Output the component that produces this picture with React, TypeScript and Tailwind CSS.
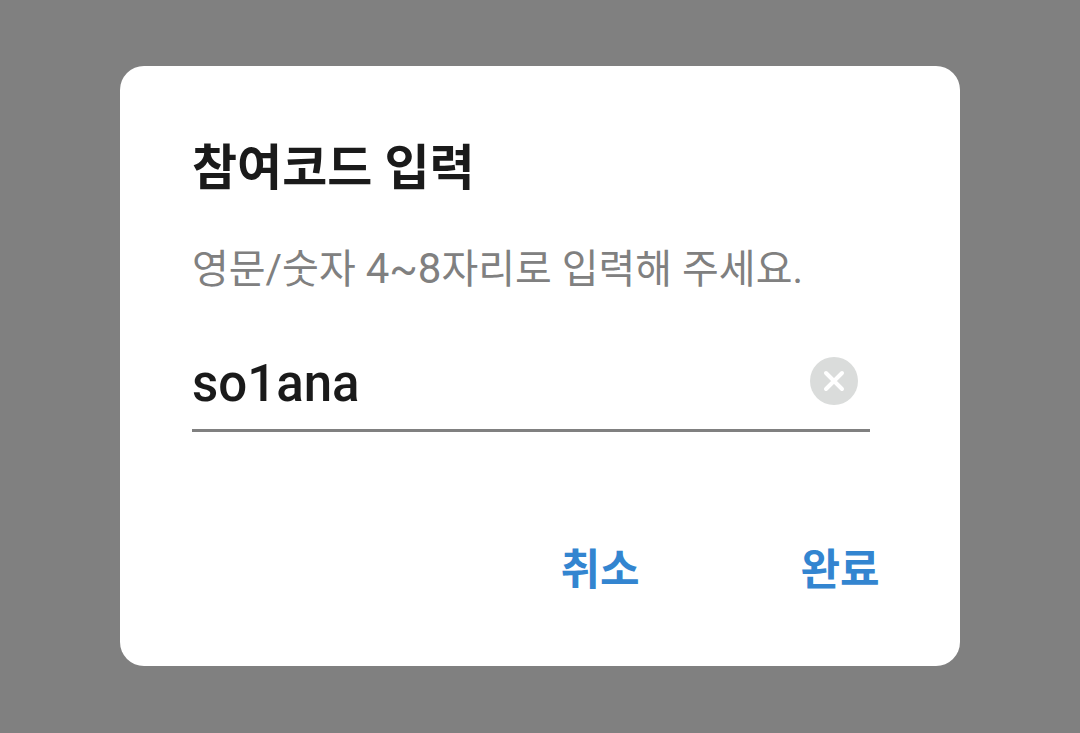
import React, { useState } from 'react';

export default function App() {
  const [code, setCode] = useState('so1ana');

  return (
    <div className="flex min-h-screen items-center justify-center bg-[#808080] px-[120px] pt-16 pb-[65px] font-[Roboto,'Noto_Sans_CJK_KR',sans-serif]">
      <form
        role="dialog"
        aria-labelledby="title"
        className="w-full rounded-3xl bg-white px-[72px] pt-[67px] pb-15"
        onSubmit={(e) => e.preventDefault()}
      >
        <h1 id="title" className="text-[49px] leading-[72px] font-bold text-[#1a1a1a]">참여코드 입력</h1>
        <label htmlFor="code" className="mt-7 block text-[40px] leading-[72px] text-[#808080]">
          영문/숫자 <span className="text-[42px]">4~8</span>자리로 입력해 주세요.
        </label>

        <div className="mt-[39px] mr-[18px] flex items-center border-b-3 border-[#808080] pr-3 pb-3">
          <input
            id="code"
            type="text"
            maxLength={8}
            value={code}
            onChange={(e) => setCode(e.target.value)}
            className="h-[72px] min-w-0 flex-1 pt-1.5 text-[51px] font-medium text-[#1a1a1a] outline-none"
          />
          <button type="button" aria-label="지우기" onClick={() => setCode('')}>
            <svg viewBox="0 0 48 48" className="size-12">
              <circle cx="24" cy="24" r="24" fill="#dadcdb" />
              <path d="M16 16L32 32M32 16L16 32" stroke="#fff" strokeWidth="4" strokeLinecap="round" />
            </svg>
          </button>
        </div>

        <div className="mt-[102px] -mr-8 flex justify-end gap-20 text-[43px] leading-[72px] font-bold text-[#3385d0]">
          <button type="button" className="w-40">취소</button>
          <button type="submit" className="w-40">완료</button>
        </div>
      </form>
    </div>
  );
}
